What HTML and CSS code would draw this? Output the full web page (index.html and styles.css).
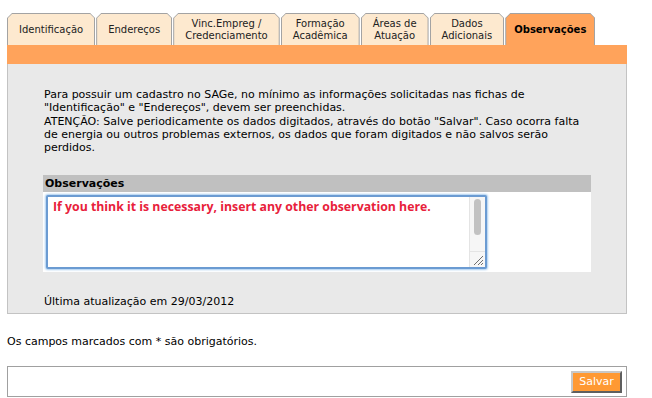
FILE: index.html
```html
<!DOCTYPE html>
<html lang="pt-BR">
<head>
<meta charset="UTF-8">
<title>SAGe - Observações</title>
<link rel="stylesheet" href="styles.css">
</head>
<body>
<div class="page">
    <ul class="tabs">
        <li class="tab"><span>Identificação</span></li>
        <li class="tab"><span>Endereços</span></li>
        <li class="tab"><span>Vinc.Empreg /<br>Credenciamento</span></li>
        <li class="tab"><span>Formação<br>Acadêmica</span></li>
        <li class="tab"><span>Áreas de<br>Atuação</span></li>
        <li class="tab"><span>Dados<br>Adicionais</span></li>
        <li class="tab active"><span>Observações</span></li>
    </ul>
    <div class="tabbar"></div>
    <div class="panel">
        <p class="notice">Para possuir um cadastro no SAGe, no mínimo as informações solicitadas nas fichas de<br>"Identificação" e "Endereços", devem ser preenchidas.<br>ATENÇÃO: Salve periodicamente os dados digitados, através do botão "Salvar". Caso ocorra falta<br>de energia ou outros problemas externos, os dados que foram digitados e não salvos serão<br>perdidos.</p>
        <div class="obs">
            <div class="obs-title">Observações</div>
            <div class="obs-body">
                <div class="obs-field">
                    <textarea class="obs-text">If you think it is necessary, insert any other observation here.</textarea>
                    <div class="scrollbar">
                        <div class="scroll-thumb"></div>
                        <svg class="resizer" width="15" height="15" viewBox="0 0 15 15">
                            <path d="M4 13 L13 4 M8 13 L13 8 M11 13 L13 11" stroke="#6f6f6f" stroke-width="1"/>
                        </svg>
                    </div>
                </div>
            </div>
        </div>
        <p class="updated">Última atualização em 29/03/2012</p>
    </div>
    <p class="required">Os campos marcados com * são obrigatórios.</p>
    <div class="actions">
        <button class="btn-save">Salvar</button>
    </div>
</div>
</body>
</html>
```

FILE: styles.css
```css
body {
    margin: 0;
    font-family: "DejaVu Sans", Verdana, sans-serif;
    font-size: 11px;
    color: #000;
    background-color: #fff;
}
.page {
    width: 620px;
    padding: 13px 0 0 7px;
}
.tabs {
    display: flex;
    list-style: none;
    margin: 0;
    padding: 0;
    height: 32px;
    font-size: 10px;
}
.tab {
    background-color: #a3a3a3;
    padding: 1px 1px 0;
    margin-right: 1px;
    clip-path: polygon(0 5px, 5px 0, calc(100% - 5px) 0, 100% 5px, 100% 100%, 0 100%);
}
.tab span {
    display: flex;
    align-items: center;
    justify-content: center;
    height: 100%;
    padding: 0 11px;
    text-align: center;
    line-height: 12px;
    background-color: #fde9cf;
    color: #222;
    clip-path: polygon(0 4px, 4px 0, calc(100% - 4px) 0, 100% 4px, 100% 100%, 0 100%);
}
.tab.active span {
    padding: 0 8px;
    background-color: #ffa35b;
    font-weight: bold;
    color: #000;
}
.tabbar {
    height: 19px;
    background-color: #ffa35b;
}
.panel {
    background-color: #e9e9e9;
    border: 1px solid #c3c3c3;
    border-top: none;
    padding: 24px 35px 4px 36px;
}
.notice {
    margin: 0;
    line-height: 13.3px;
}
.obs {
    margin: 21px 0 0 -1px;
    width: 548px;
}
.obs-title {
    height: 17px;
    line-height: 17px;
    padding: 0 2px;
    background-color: #c0c0c0;
    font-weight: bold;
}
.obs-body {
    background-color: #fff;
    padding: 3px;
}
.obs-field {
    position: relative;
    width: 441px;
    height: 74px;
}
.obs-text {
    display: block;
    box-sizing: border-box;
    width: 100%;
    height: 100%;
    margin: 0;
    padding: 2px 22px 2px 5px;
    border: 2px solid #6b9bd2;
    border-radius: 2px;
    box-shadow: 0 0 2px 1px #a9cdf0;
    font-family: "Open Sans", sans-serif;
    font-weight: bold;
    font-size: 12.3px;
    line-height: 16px;
    color: #e8213b;
    overflow: hidden;
    resize: none;
    outline: none;
}
.scrollbar {
    position: absolute;
    top: 2px;
    right: 2px;
    bottom: 2px;
    width: 15px;
    background-color: #f6f6f6;
    border-left: 1px solid #e4e4e4;
}
.scroll-thumb {
    width: 7px;
    height: 36px;
    margin: 2px 0 0 4px;
    border-radius: 4px;
    background-color: #c2c2c2;
}
.resizer {
    position: absolute;
    left: 0;
    bottom: 0;
    border-top: 1px solid #e4e4e4;
}
.updated {
    margin: 23px 0 0;
    line-height: 13.3px;
}
.required {
    margin: 21px 0 0;
    line-height: 13px;
}
.actions {
    display: flex;
    justify-content: flex-end;
    align-items: flex-start;
    box-sizing: border-box;
    height: 31px;
    margin-top: 18px;
    padding: 4px 4px 0;
    border: 1px solid #a0a0a0;
}
.btn-save {
    width: 51px;
    height: 22px;
    padding: 0;
    background-color: #ff9933;
    color: #fff;
    font-family: "DejaVu Sans", Verdana, sans-serif;
    font-size: 11px;
    border: 2px solid;
    border-color: #c8c8c8 #5f5f5f #5f5f5f #c8c8c8;
    cursor: pointer;
}
```
